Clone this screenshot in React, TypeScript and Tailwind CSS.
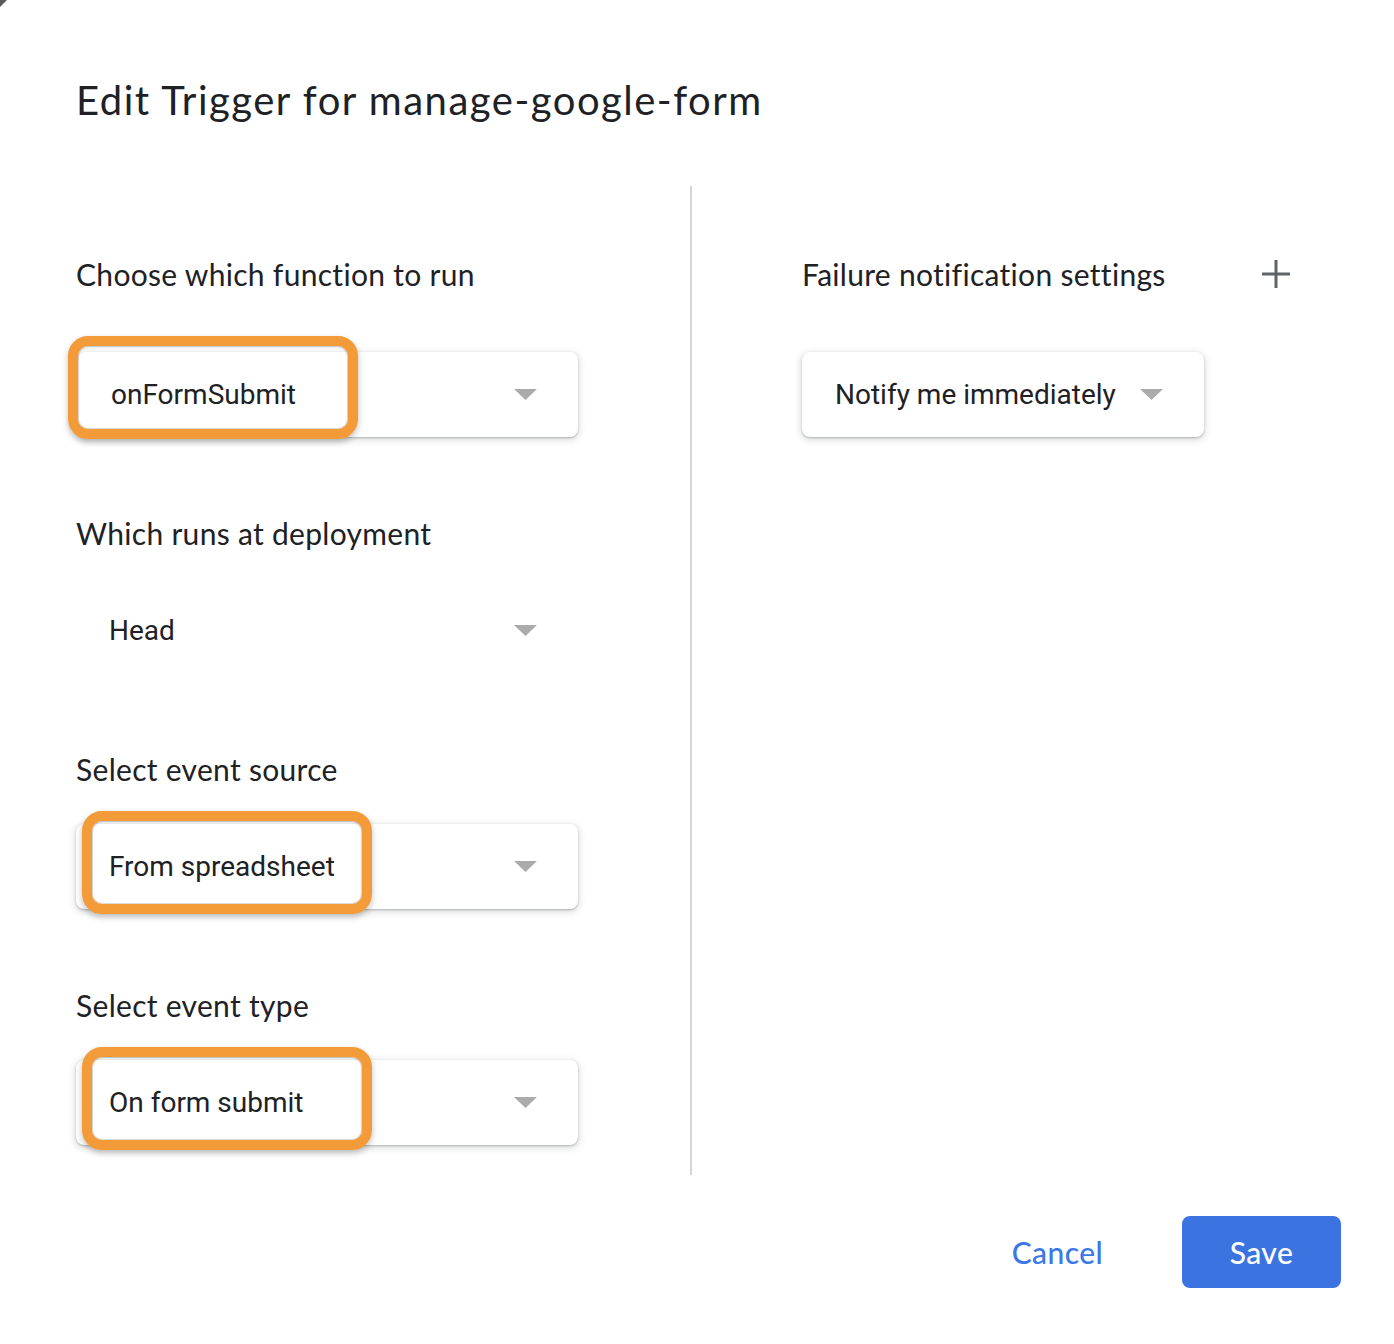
import React from "react";

const Arrow = () => (
  <svg width="23" height="11" viewBox="0 0 23 11" className="shrink-0">
    <path d="M0 0 L23 0 L11.5 11 Z" fill="#ababab" />
  </svg>
);

type SelectProps = {
  text: string;
  boxed?: boolean;
  width: number;
  highlight?: { left: number; top: number };
  arrowGap?: boolean;
};

const ringClass =
  "absolute w-[290px] h-[103px] rounded-[20px] border-[10px] border-[#f29b38] shadow-[0_3px_6px_rgba(0,0,0,0.25),inset_0_0_0_1px_rgba(0,0,0,0.12),inset_0_1px_3px_rgba(0,0,0,0.15)] pointer-events-none";

function Select({ text, boxed = true, width, highlight, arrowGap }: SelectProps) {
  return (
    <div
      className={
        "relative h-[85px] flex items-center pl-[33px] pr-[41px] rounded-[8px] " +
        (boxed
          ? "bg-white shadow-[0_1px_2px_rgba(60,64,67,0.3),0_2px_6px_2px_rgba(60,64,67,0.15)] "
          : "") +
        (arrowGap ? "gap-[24px]" : "justify-between")
      }
      style={{ width }}
    >
      {highlight && (
        <div className={ringClass} style={{ left: highlight.left, top: highlight.top }} />
      )}
      <span className="relative shrink-0 whitespace-nowrap text-[28px] text-[#202124] font-['Roboto',sans-serif] leading-none">
        {text}
      </span>
      <Arrow />
    </div>
  );
}

export default function App() {
  return (
    <div className="relative w-[1394px] h-[1344px] bg-white overflow-hidden font-['Lato',sans-serif] text-[#202124]">
      <svg className="absolute left-0 top-0" width="8" height="8" viewBox="0 0 8 8">
        <path d="M0 0 H7 L0 7 Z" fill="#5a5a5a" />
      </svg>

      <div className="pt-[76px] pl-[76px]">
        <h1 className="text-[40px] leading-[48px] font-normal tracking-[1.5px]">
          Edit Trigger for manage-google-form
        </h1>
      </div>

      <div className="mt-[62px] flex h-[989px]">
        {/* Left column */}
        <div className="w-[690px] pl-[76px] pt-[68px] flex flex-col">
          <div className="h-[40px] flex items-center text-[30px] tracking-[0.3px]">Choose which function to run</div>
          <div className="mt-[58px] ml-[2px]">
            <Select text="onFormSubmit" width={500} highlight={{ left: -10, top: -16 }} />
          </div>

          <div className="mt-[76px] h-[40px] flex items-center text-[30px] tracking-[0.3px]">Which runs at deployment</div>
          <div className="mt-[35px]">
            <Select text="Head" boxed={false} width={502} />
          </div>

          <div className="mt-[76px] h-[40px] flex items-center text-[30px] tracking-[0.3px]">Select event source</div>
          <div className="mt-[35px]">
            <Select text="From spreadsheet" width={502} highlight={{ left: 6, top: -13 }} />
          </div>

          <div className="mt-[76px] h-[40px] flex items-center text-[30px] tracking-[0.3px]">Select event type</div>
          <div className="mt-[35px]">
            <Select text="On form submit" width={502} highlight={{ left: 6, top: -13 }} />
          </div>
        </div>

        {/* Divider */}
        <div className="w-[2px] bg-[#d3d5d8]" />

        {/* Right column */}
        <div className="pl-[110px] pt-[68px] flex flex-col">
          <div className="w-[488px] h-[40px] flex items-center justify-between">
            <span className="text-[30px] tracking-[0.3px]">Failure notification settings</span>
            <svg width="28" height="28" viewBox="0 0 28 28">
              <path d="M14 0 V28 M0 14 H28" stroke="#5f6368" strokeWidth="3" />
            </svg>
          </div>
          <div className="mt-[58px]">
            <Select text="Notify me immediately" width={402} arrowGap />
          </div>
        </div>
      </div>

      <div className="mt-[41px] flex justify-end items-center pr-[53px]">
        <button className="text-[30px] font-medium text-[#3b78e7] mr-[79px] tracking-[0.4px]">Cancel</button>
        <button className="w-[159px] h-[72px] rounded-[8px] bg-[#3b74e0] text-white text-[30px] font-medium tracking-[0.4px]">
          Save
        </button>
      </div>
    </div>
  );
}
